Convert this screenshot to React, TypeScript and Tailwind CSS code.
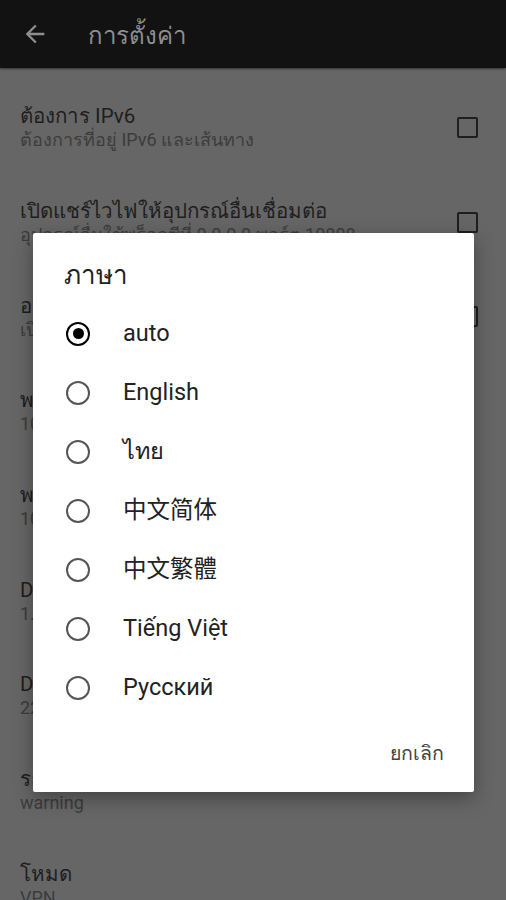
import { useState } from "react";

// Settings screen with the language picker dialog open on top of it.
// Colours below are the ones seen through the scrim, not the raw theme.

const rows = [
  { title: "ต้องการ IPv6", sub: "ต้องการที่อยู่ IPv6 และเส้นทาง", check: true },
  { title: "เปิดแชร์ไวไฟให้อุปกรณ์อื่นเชื่อมต่อ", sub: "อุปกรณ์อื่นใช้พร็อกซีที่ 0.0.0.0 พอร์ต 10808", check: true },
  { title: "อนุญาตการเชื่อมต่อที่ไม่ปลอดภัย", sub: "เปิดใช้งานเพื่อข้ามการตรวจสอบ", check: true },
  { title: "พอร์ต SOCKS5 ในเครื่อง", sub: "10808", check: false },
  { title: "พอร์ต HTTP ในเครื่อง", sub: "10809", check: false },
  { title: "DNS ระยะไกล", sub: "1.1.1.1", check: false },
  { title: "DNS ในประเทศ", sub: "223.5.5.5", check: false },
  { title: "ระดับบันทึก", sub: "warning", check: false },
  { title: "โหมด", sub: "VPN", check: false },
];

const languages = ["auto", "English", "ไทย", "中文简体", "中文繁體", "Tiếng Việt", "Русский"];

const font = "font-['Roboto','Noto_Sans','Noto_Sans_CJK_SC',sans-serif]";

export default function App() {
  const [lang, setLang] = useState("auto");

  return (
    <div className={`relative h-[900px] w-[506px] overflow-hidden bg-[#666666] ${font}`}>
      <header className="flex h-[68px] items-center bg-[#121212] shadow-[0_1px_2px_rgba(0,0,0,0.5)]">
        <svg viewBox="0 0 24 24" className="ml-[21px] h-[28px] w-[28px] fill-[#8e8e8e]">
          <path d="M20 11H7.83l5.59-5.59L12 4l-8 8 8 8 1.41-1.41L7.83 13H20v-2z" />
        </svg>
        <h1 className="ml-[39px] mt-[4px] text-[24px] text-[#8e8e8e]">การตั้งค่า</h1>
      </header>

      <div className="pt-3">
        {rows.map((r) => (
          <div key={r.title} className="flex h-[94.7px] items-center pl-5 pr-[28px]">
            <div className="min-w-0 flex-1">
              <div className="whitespace-nowrap text-[20.5px] leading-[26px] text-[#1e1e1e]">{r.title}</div>
              <div className="whitespace-nowrap text-[18px] leading-[22px] text-[#3c3c3c]">{r.sub}</div>
            </div>
            {r.check && <div className="h-[21px] w-[21px] shrink-0 rounded-[2px] border-2 border-[#1e1e1e]" />}
          </div>
        ))}
      </div>

      <div className="absolute left-[33px] top-[233px] w-[441px] rounded-[2px] bg-white shadow-[0_6px_20px_rgba(0,0,0,0.35)]">
        <h2 className="px-[31px] pb-[14px] pt-[27px] text-[26px] leading-[30px] text-[#222]">ภาษา</h2>
        {languages.map((l) => (
          <button
            key={l}
            onClick={() => setLang(l)}
            className="flex h-[59px] w-full items-center pl-[33px] text-left"
          >
            <span
              className={`flex h-[24px] w-[24px] shrink-0 items-center justify-center rounded-full border-2 ${
                lang === l ? "border-black" : "border-[#555]"
              }`}
            >
              {lang === l && <span className="h-[11px] w-[11px] rounded-full bg-black" />}
            </span>
            <span className="ml-[33px] text-[23.5px] text-[#222]">{l}</span>
          </button>
        ))}
        <div className="flex justify-end pb-[21px] pr-[30px] pt-[20px]">
          <button className="h-[34px] text-[19.5px] text-[#444]">ยกเลิก</button>
        </div>
      </div>
    </div>
  );
}
